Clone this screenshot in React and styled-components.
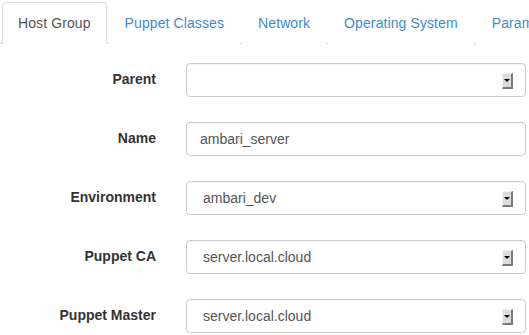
import React from "react";
import styled, { createGlobalStyle } from "styled-components";

const GlobalStyle = createGlobalStyle`
  html, body {
    margin: 0;
    padding: 0;
    background: #fff;
    font-family: "Liberation Sans", Arial, sans-serif;
    font-size: 14px;
    color: #333;
    overflow: hidden;
  }
`;

const Page = styled.div`
  width: 529px;
  height: 335px;
  overflow: hidden;
`;

const Tabs = styled.ul`
  display: flex;
  margin: 0;
  padding: 2px 0 0 2px;
  list-style: none;
  border-bottom: 1px solid #ddd;
  white-space: nowrap;
`;

const Tab = styled.li`
  margin: 0 2px -1px 0;
  padding: 10px 15px;
  line-height: 20px;
  letter-spacing: 0.1px;
  border: 1px solid ${({ $active }) => ($active ? "#ddd" : "transparent")};
  border-bottom-color: ${({ $active }) => ($active ? "#fff" : "transparent")};
  border-radius: 4px 4px 0 0;
  background: #fff;
  color: ${({ $active }) => ($active ? "#555" : "#428bca")};
  flex-shrink: 0;
`;

const Form = styled.div`
  display: flex;
  flex-direction: column;
  gap: 25px;
  padding-top: 19px;
`;

const Row = styled.div`
  display: grid;
  grid-template-columns: 156px 340px;
  column-gap: 30px;
  align-items: center;
`;

const Label = styled.label`
  text-align: right;
  font-weight: bold;
  color: #333;
  padding-bottom: 3px;
`;

const Field = styled.div`
  box-sizing: border-box;
  height: 34px;
  display: flex;
  align-items: center;
  justify-content: space-between;
  border: 1px solid #ccc;
  border-radius: 4px;
  padding: 0 12px 0 ${({ $select }) => ($select ? "16px" : "13px")};
  color: #555;
  box-shadow: inset 0 1px 1px rgba(0, 0, 0, 0.04);
`;

const ArrowButton = styled.span`
  box-sizing: border-box;
  width: 11px;
  height: 16px;
  margin-top: 2px;
  background: #dcdcdc;
  border-top: 1px solid #f4f4f4;
  border-left: 1px solid #f4f4f4;
  border-right: 2px solid #7a7a7a;
  border-bottom: 2px solid #7a7a7a;
  display: flex;
  align-items: center;
  justify-content: center;
`;

const Triangle = styled.span`
  width: 0;
  height: 0;
  border-left: 3px solid transparent;
  border-right: 3px solid transparent;
  border-top: 3px solid #000;
`;

const tabs = ["Host Group", "Puppet Classes", "Network", "Operating System", "Parameters"];

const fields = [
  { label: "Parent", value: "", select: true },
  { label: "Name", value: "ambari_server", select: false },
  { label: "Environment", value: "ambari_dev", select: true },
  { label: "Puppet CA", value: "server.local.cloud", select: true },
  { label: "Puppet Master", value: "server.local.cloud", select: true },
];

const App = () => (
  <Page>
    <GlobalStyle />
    <Tabs>
      {tabs.map((t, i) => (
        <Tab key={t} $active={i === 0}>
          {t}
        </Tab>
      ))}
    </Tabs>
    <Form>
      {fields.map((f) => (
        <Row key={f.label}>
          <Label>{f.label}</Label>
          <Field $select={f.select}>
            <span>{f.value}</span>
            {f.select && (
              <ArrowButton>
                <Triangle />
              </ArrowButton>
            )}
          </Field>
        </Row>
      ))}
    </Form>
  </Page>
);

export default App;
